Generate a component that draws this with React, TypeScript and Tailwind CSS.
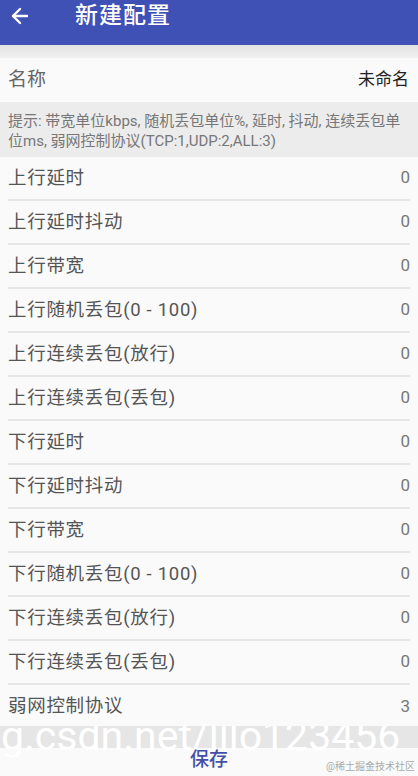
import { ArrowLeft } from "lucide-react";

const rows = [
  { label: "上行延时", value: "0" },
  { label: "上行延时抖动", value: "0" },
  { label: "上行带宽", value: "0" },
  { label: "上行随机丢包(0 - 100)", value: "0" },
  { label: "上行连续丢包(放行)", value: "0" },
  { label: "上行连续丢包(丢包)", value: "0" },
  { label: "下行延时", value: "0" },
  { label: "下行延时抖动", value: "0" },
  { label: "下行带宽", value: "0" },
  { label: "下行随机丢包(0 - 100)", value: "0" },
  { label: "下行连续丢包(放行)", value: "0" },
  { label: "下行连续丢包(丢包)", value: "0" },
  { label: "弱网控制协议", value: "3" },
];

const font = { fontFamily: 'Roboto, "Noto Sans CJK SC", sans-serif' };

export default function App() {
  return (
    <div className="w-[418px] h-[776px] overflow-hidden bg-[#fafafa] flex flex-col" style={font}>
      {/* toolbar */}
      <div className="h-[45px] bg-[#3f51b5] flex items-center text-white shrink-0">
        <ArrowLeft className="ml-[8px] w-[24px] h-[24px] -mt-[13px]" strokeWidth={2.4} />
        <div className="ml-[43px] -mt-[13px] text-[23px] font-medium tracking-[1px]">新建配置</div>
      </div>
      <div className="h-[13px] bg-gradient-to-b from-[#e2e2e2] to-[#f0f0f0] shrink-0" />

      {/* name */}
      <div className="h-[44px] flex items-center justify-between px-[8px] shrink-0">
        <span className="text-[19px] text-[#666]">名称</span>
        <span className="text-[17px] text-[#222] mr-[1px]">未命名</span>
      </div>

      {/* hint */}
      <div className="h-[55px] bg-[#ececec] px-[8px] pt-[9px] text-[15px] leading-[20px] text-[#777] shrink-0">
        提示: 带宽单位kbps, 随机丢包单位%, 延时, 抖动, 连续丢包单位ms, 弱网控制协议(TCP:1,UDP:2,ALL:3)
      </div>

      {/* rows */}
      <div className="flex flex-col shrink-0">
        {rows.map((r, i) => (
          <div
            key={r.label}
            className={`mx-[8px] flex items-center justify-between ${
              i < rows.length - 1 ? "h-[44px] border-b-2 border-[#e6e6e6]" : "h-[41px] pt-[2px]"
            }`}
          >
            <span className="text-[18.5px] tracking-[0.7px] text-[#555] mt-[1px]">{r.label}</span>
            <span className="text-[17px] text-[#777]">{r.value}</span>
          </div>
        ))}
      </div>

      {/* bottom bar */}
      <div className="relative flex-1 overflow-hidden">
        <div className="h-[22px] bg-[#e6e6e6]" />
        <div className="absolute left-[-22px] top-[-10px] text-[41px] leading-none text-white whitespace-nowrap">
          bg.csdn.net/lllo123456
        </div>
        <div className="absolute left-0 right-0 top-[22px] text-center text-[19px] leading-[24px] text-[#4450a8] font-medium">保存</div>
        <div className="absolute right-[3px] bottom-[3px] text-[10px] leading-[12px] text-[#aaa]">@稀土掘金技术社区</div>
      </div>
    </div>
  );
}
